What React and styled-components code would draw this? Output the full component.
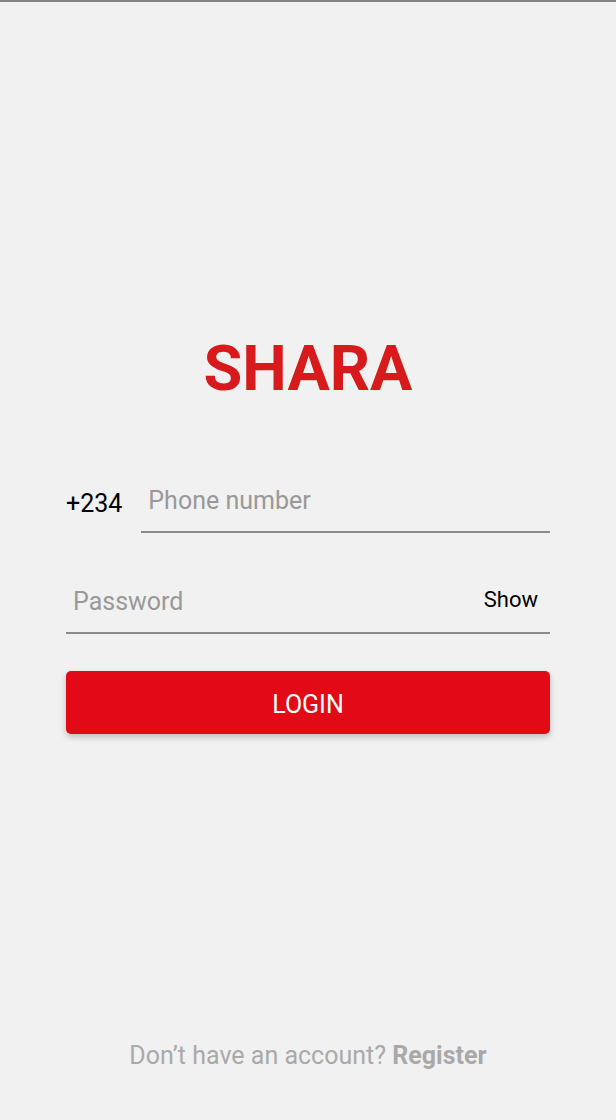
import React from "react";
import styled, { createGlobalStyle } from "styled-components";

const GlobalStyle = createGlobalStyle`
  *, *::before, *::after { box-sizing: border-box; }
  body {
    margin: 0;
    background: #f1f1f1;
    font-family: Roboto, "Liberation Sans", sans-serif;
  }
`;

const Screen = styled.main`
  min-height: 100vh;
  display: flex;
  flex-direction: column;
  border-top: 2px solid #828282;
  padding: 0 66px 48px;
`;

const Brand = styled.h1`
  margin: 329px 0 0;
  font-size: 63px;
  line-height: 76px;
  font-weight: 700;
  text-align: center;
  color: #d71a1c;
`;

const Form = styled.form`
  display: flex;
  flex-direction: column;
  margin-top: 62px;
`;

const Row = styled.div`
  display: flex;
  align-items: center;
  gap: 19px;
  margin-bottom: 37px;
`;

const DialCode = styled.label`
  padding-top: 6px;
  font-size: 25px;
  line-height: 32px;
  color: #000;
`;

const Field = styled.div`
  flex: 1;
  min-width: 0;
  height: 64px;
  display: flex;
  align-items: center;
  padding: 0 12px 0 7px;
  border-bottom: 2px solid #8b8b8b;
`;

const Input = styled.input`
  flex: 1;
  min-width: 0;
  border: 0;
  padding: 2px 0 0;
  outline: 0;
  background: transparent;
  font: 400 25px/32px Roboto, "Liberation Sans", sans-serif;
  color: #000;
  &::placeholder { color: #999; opacity: 1; }
`;

const ShowButton = styled.button`
  border: 0;
  padding: 0 0 2px;
  background: none;
  font: 400 22px/32px Roboto, "Liberation Sans", sans-serif;
  color: #000;
  cursor: pointer;
`;

const LoginButton = styled.button`
  height: 63px;
  border: 0;
  border-radius: 5px;
  padding: 5px 0 0;
  background: #e30a17;
  box-shadow: 0 3px 6px rgba(0, 0, 0, 0.22);
  font: 400 25px/32px Roboto, "Liberation Sans", sans-serif;
  color: #fff;
  cursor: pointer;
`;

const Footer = styled.p`
  margin: auto 0 0;
  font-size: 25px;
  line-height: 32px;
  text-align: center;
  color: #a9a9a9;
`;

const RegisterLink = styled.a`
  font-weight: 700;
  color: inherit;
  text-decoration: none;
`;

export default function App() {
  const [visible, setVisible] = React.useState(false);
  return (
    <>
      <GlobalStyle />
      <Screen>
        <Brand>SHARA</Brand>
        <Form onSubmit={(e) => e.preventDefault()}>
          <Row>
            <DialCode htmlFor="phone">+234</DialCode>
            <Field>
              <Input id="phone" type="tel" placeholder="Phone number" />
            </Field>
          </Row>
          <Row>
            <Field>
              <Input type={visible ? "text" : "password"} placeholder="Password" aria-label="Password" />
              <ShowButton type="button" onClick={() => setVisible(!visible)}>
                {visible ? "Hide" : "Show"}
              </ShowButton>
            </Field>
          </Row>
          <LoginButton type="submit">LOGIN</LoginButton>
        </Form>
        <Footer>
          Don’t have an account? <RegisterLink href="#register">Register</RegisterLink>
        </Footer>
      </Screen>
    </>
  );
}
